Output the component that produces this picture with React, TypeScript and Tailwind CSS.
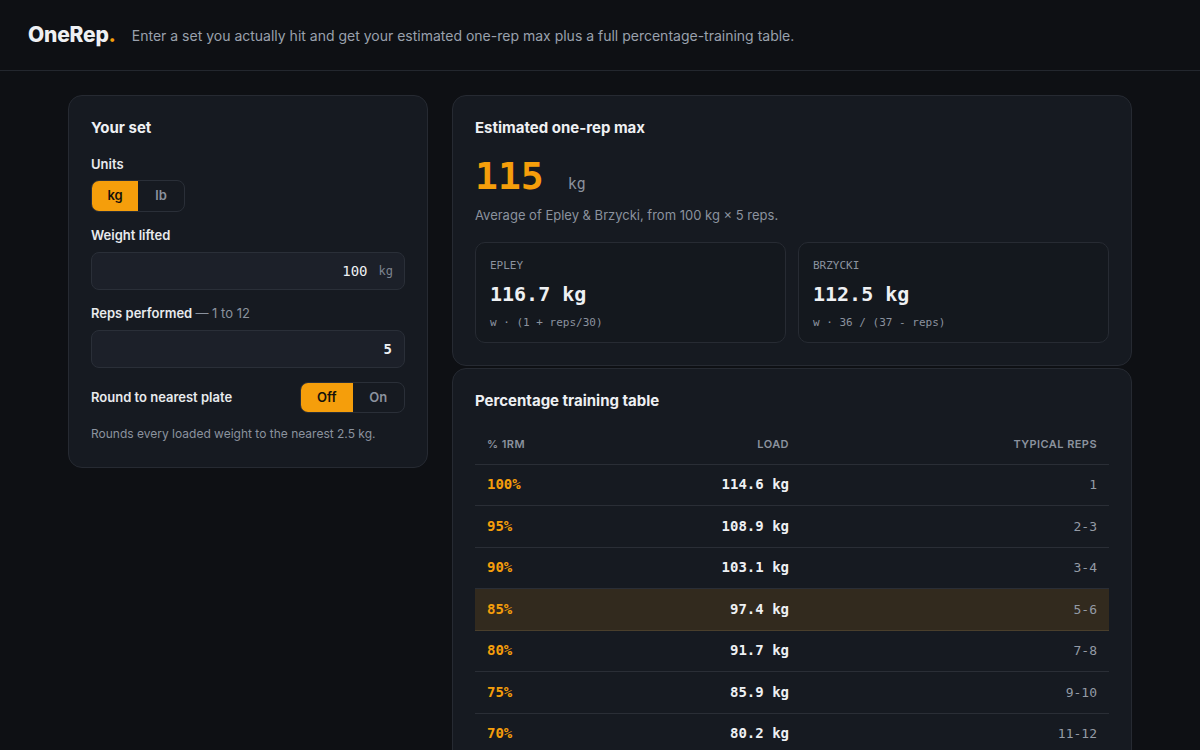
import React, { useState } from 'react';

const mono = "font-['DejaVu_Sans_Mono',monospace]";

const rows = [
  { pct: '100%', load: '114.6 kg', reps: '1' },
  { pct: '95%', load: '108.9 kg', reps: '2-3' },
  { pct: '90%', load: '103.1 kg', reps: '3-4' },
  { pct: '85%', load: '97.4 kg', reps: '5-6', hit: true },
  { pct: '80%', load: '91.7 kg', reps: '7-8' },
  { pct: '75%', load: '85.9 kg', reps: '9-10' },
  { pct: '70%', load: '80.2 kg', reps: '11-12' },
  { pct: '65%', load: '74.5 kg', reps: '12+' },
];

const Segmented = ({ options, value, onChange, className = '' }: { options: string[]; value: string; onChange: (v: string) => void; className?: string }) => (
  <div className={`flex rounded-lg border border-[#2a2f38] overflow-hidden ${className}`}>
    {options.map((o) => (
      <button
        key={o}
        onClick={() => onChange(o)}
        className={`flex-1 text-[13px] font-semibold ${
          value === o ? 'bg-[#f59e0b] text-[#14110a]' : 'bg-transparent text-[#8b929e]'
        }`}
      >
        {o}
      </button>
    ))}
  </div>
);

export default function App() {
  const [unit, setUnit] = useState('kg');
  const [round, setRound] = useState('Off');

  return (
    <div className="min-h-screen bg-[#0e1014] text-[#e8eaed] font-['Inter',sans-serif]">
      <header className="h-[71px] flex items-center gap-[16px] px-7 border-b border-[#23272e]">
        <div className="text-[21px] font-extrabold tracking-[-0.01em] text-[#eef0f3]">
          OneRep<span className="text-[#f59e0b]">.</span>
        </div>
        <p className="text-[14px] text-[#9aa1ad]">
          Enter a set you actually hit and get your estimated one-rep max plus a full percentage-training table.
        </p>
      </header>

      <main className="max-w-[1064px] mx-auto pt-6 flex gap-6 items-start">
        <section className="w-[360px] shrink-0 rounded-[14px] border border-[#262a32] bg-[#161a21] p-[22px] pb-[24px]">
          <h2 className="text-[15px] font-bold leading-5 text-[#eef0f3]">Your set</h2>

          <div className="mt-[18px] text-[13px] font-semibold leading-4">Units</div>
          <Segmented options={['kg', 'lb']} value={unit} onChange={setUnit} className="mt-2 w-[94px] h-[32px]" />

          <div className="mt-[15px] text-[13px] font-semibold leading-4">Weight lifted</div>
          <div className="mt-[9px] h-[38px] flex items-center justify-end gap-[11px] rounded-lg border border-[#2a2f38] bg-[#1c2029] pr-[11px]">
            <span className={`${mono} text-[14px] text-[#eef0f3]`}>100</span>
            <span className={`${mono} text-[12px] text-[#7d8490]`}>{unit}</span>
          </div>

          <div className="mt-[15px] text-[13px] font-semibold leading-4">
            Reps performed <span className="font-normal text-[#8b929e]">— 1 to 12</span>
          </div>
          <div className="mt-[9px] h-[38px] flex items-center justify-end rounded-lg border border-[#2a2f38] bg-[#1c2029] pr-[12px]">
            <span className={`${mono} text-[14px] font-bold text-[#eef0f3]`}>5</span>
          </div>

          <div className="mt-[14px] flex items-center justify-between">
            <span className="text-[13px] font-semibold">Round to nearest plate</span>
            <Segmented options={['Off', 'On']} value={round} onChange={setRound} className="w-[105px] h-[31px]" />
          </div>

          <p className="mt-[12px] text-[12px] text-[#8b929e]">Rounds every loaded weight to the nearest 2.5 {unit}.</p>
        </section>

        <div className="flex-1 flex flex-col gap-[2px]">
          <section className="rounded-[14px] border border-[#262a32] bg-[#161a21] p-[22px]">
            <h2 className="text-[15px] font-bold leading-5 text-[#eef0f3]">Estimated one-rep max</h2>
            <div className="mt-[16px] flex items-baseline gap-[24px]">
              <span className={`${mono} text-[38px] leading-[44px] font-bold text-[#f59e0b]`}>115</span>
              <span className={`${mono} text-[15px] text-[#8b929e]`}>kg</span>
            </div>
            <p className="mt-[8px] text-[13px] text-[#8b929e]">Average of Epley &amp; Brzycki, from 100 kg × 5 reps.</p>
            <div className="mt-[16px] grid grid-cols-2 gap-3">
              {[
                { name: 'EPLEY', val: '116.7 kg', f: 'w · (1 + reps/30)' },
                { name: 'BRZYCKI', val: '112.5 kg', f: 'w · 36 / (37 - reps)' },
              ].map((c) => (
                <div key={c.name} className="h-[101px] rounded-[10px] border border-[#272b33] bg-[#14181e] px-[14px] pt-[15px]">
                  <div className={`${mono} text-[11px] text-[#8b929e] leading-4`}>{c.name}</div>
                  <div className={`${mono} mt-[6px] text-[20px] font-bold leading-7 text-[#eef0f3]`}>{c.val}</div>
                  <div className={`${mono} mt-[7px] text-[11px] text-[#8b929e] leading-4`}>{c.f}</div>
                </div>
              ))}
            </div>
          </section>

          <section className="rounded-[14px] border border-[#262a32] bg-[#161a21] p-[22px]">
            <h2 className="text-[15px] font-bold leading-5 text-[#eef0f3]">Percentage training table</h2>
            <div className="mt-[14px]">
              <div className="grid grid-cols-[120px_206px_1fr] h-[40px] items-center border-b border-[#2a2e36] text-[11px] font-semibold tracking-[0.04em] text-[#8b929e]">
                <span className="pl-3">% 1RM</span>
                <span className="text-right pr-3">LOAD</span>
                <span className="text-right pr-3">TYPICAL REPS</span>
              </div>
              {rows.map((r) => (
                <div
                  key={r.pct}
                  className={`grid grid-cols-[120px_206px_1fr] h-[41.5px] items-center border-b ${
                    r.hit ? 'bg-[#322a1e] border-[#4a3f2c]' : 'border-[#2a2e36]'
                  } ${mono}`}
                >
                  <span className="pl-3 text-[14px] font-bold text-[#f59e0b]">{r.pct}</span>
                  <span className="text-right pr-3 text-[14px] font-bold text-[#eef0f3]">{r.load}</span>
                  <span className="text-right pr-3 text-[13px] text-[#949aa5]">{r.reps}</span>
                </div>
              ))}
            </div>
          </section>
        </div>
      </main>
    </div>
  );
}
